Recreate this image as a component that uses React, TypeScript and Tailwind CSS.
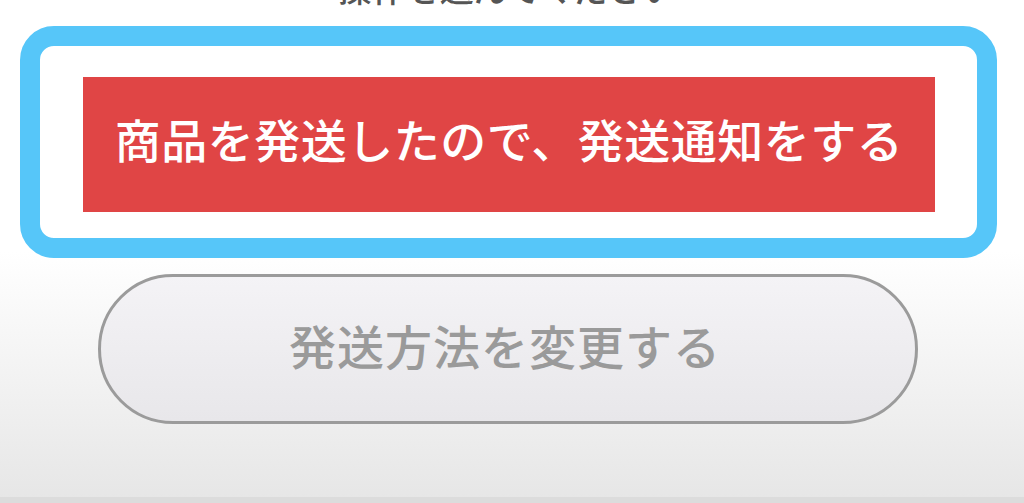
export default function App() {
  return (
    <div
      className="relative flex h-[503px] w-[1024px] flex-col overflow-hidden bg-gradient-to-b from-white from-50% to-[#e6e6e6]"
      style={{ fontFamily: '"Noto Sans CJK JP", "Noto Sans", sans-serif' }}
    >
      {/* heading, mostly scrolled off the top */}
      <div className="-mt-[32px] flex h-[40px] shrink-0 justify-center pr-[10px] text-[34px] leading-[40px] font-medium text-[#555]">
        操作を選んでください
      </div>

      {/* highlighted primary action */}
      <div className="ml-[20px] mt-[18px] h-[232px] w-[977px] shrink-0 rounded-[34px] border-[20px] border-[#56c6f9] bg-white pl-[43px] pr-[42px] pt-[31px]">
        <button className="flex h-[135px] w-full items-center justify-center bg-[#e04545] pb-[12px] text-[46px] font-medium tracking-[0.5px] text-white">
          商品を発送したので、発送通知をする
        </button>
      </div>

      {/* secondary action */}
      <button className="ml-[98px] mt-[16px] flex h-[150px] w-[820px] shrink-0 items-center justify-center rounded-full border-[3px] border-[#9b9b9b] bg-gradient-to-b from-[#f4f3f6] to-[#e8e7ea] pb-[8px] pr-[6px] text-[47px] font-medium tracking-[1px] text-[#9a9a9a]">
        発送方法を変更する
      </button>

      <div className="absolute bottom-0 left-0 h-[6px] w-full bg-[#dcdcdc]" />
    </div>
  );
}
